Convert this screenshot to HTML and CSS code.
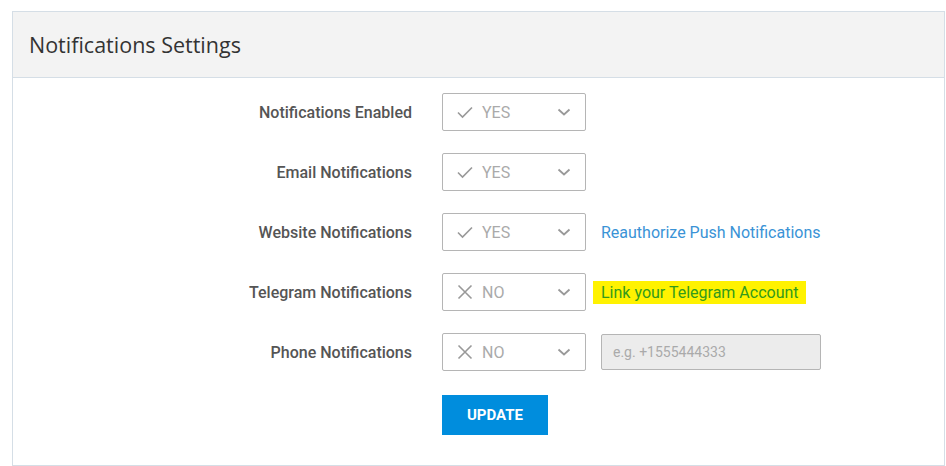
FILE: index.html
```html
<!DOCTYPE html>
<html>
<head>
<meta charset="utf-8">
<link rel="stylesheet" href="styles.css">
</head>
<body>
<div class="page">
  <section class="card">
    <header class="card-header">
      <h2 class="card-title">Notifications Settings</h2>
    </header>
    <div class="card-body">
      <div class="row">
        <label class="label">Notifications Enabled</label>
        <div class="select">
          <svg class="ico" viewBox="0 0 18 18"><path d="M2 9.5l4.5 4.5L16 4.5" fill="none" stroke="currentColor" stroke-width="1.6"/></svg>
          <span class="val">YES</span>
          <svg class="chev" viewBox="0 0 14 10"><path d="M1.5 2.5l5.5 5 5.5-5" fill="none" stroke="currentColor" stroke-width="1.8"/></svg>
        </div>
      </div>
      <div class="row">
        <label class="label">Email Notifications</label>
        <div class="select">
          <svg class="ico" viewBox="0 0 18 18"><path d="M2 9.5l4.5 4.5L16 4.5" fill="none" stroke="currentColor" stroke-width="1.6"/></svg>
          <span class="val">YES</span>
          <svg class="chev" viewBox="0 0 14 10"><path d="M1.5 2.5l5.5 5 5.5-5" fill="none" stroke="currentColor" stroke-width="1.8"/></svg>
        </div>
      </div>
      <div class="row">
        <label class="label">Website Notifications</label>
        <div class="select">
          <svg class="ico" viewBox="0 0 18 18"><path d="M2 9.5l4.5 4.5L16 4.5" fill="none" stroke="currentColor" stroke-width="1.6"/></svg>
          <span class="val">YES</span>
          <svg class="chev" viewBox="0 0 14 10"><path d="M1.5 2.5l5.5 5 5.5-5" fill="none" stroke="currentColor" stroke-width="1.8"/></svg>
        </div>
        <a class="link">Reauthorize Push Notifications</a>
      </div>
      <div class="row">
        <label class="label">Telegram Notifications</label>
        <div class="select">
          <svg class="ico" viewBox="0 0 18 18"><path d="M2.5 2.5l13 13M15.5 2.5l-13 13" fill="none" stroke="currentColor" stroke-width="1.6"/></svg>
          <span class="val">NO</span>
          <svg class="chev" viewBox="0 0 14 10"><path d="M1.5 2.5l5.5 5 5.5-5" fill="none" stroke="currentColor" stroke-width="1.8"/></svg>
        </div>
        <a class="link highlight">Link your Telegram Account</a>
      </div>
      <div class="row">
        <label class="label">Phone Notifications</label>
        <div class="select">
          <svg class="ico" viewBox="0 0 18 18"><path d="M2.5 2.5l13 13M15.5 2.5l-13 13" fill="none" stroke="currentColor" stroke-width="1.6"/></svg>
          <span class="val">NO</span>
          <svg class="chev" viewBox="0 0 14 10"><path d="M1.5 2.5l5.5 5 5.5-5" fill="none" stroke="currentColor" stroke-width="1.8"/></svg>
        </div>
        <input class="phone" type="text" placeholder="e.g. +1555444333" disabled>
      </div>
      <div class="row actions">
        <span class="label"></span>
        <button class="btn">UPDATE</button>
      </div>
    </div>
  </section>
</div>
</body>
</html>
```

FILE: styles.css
```css
* { box-sizing: border-box; }
html, body { margin: 0; padding: 0; background: #fff; }
body { font-family: Roboto, "Liberation Sans", sans-serif; }
.page { padding: 11px 1px 0 12px; }
.card {
  border: 1px solid #d5dee6;
  background: #fff;
  height: 455px;
}
.card-header {
  background: #f3f3f3;
  border-bottom: 1px solid #d5dee6;
  height: 66px;
  display: flex;
  align-items: center;
  padding-left: 16px;
}
.card-title {
  margin: 0;
  font-family: "Open Sans", "DejaVu Sans", sans-serif;
  font-weight: 400;
  font-size: 21.5px;
  color: #333;
  margin-top: -1px;
}
.card-body {
  padding-top: 15px;
  display: flex;
  flex-direction: column;
  gap: 22px;
}
.row {
  display: flex;
  align-items: center;
  height: 38px;
}
.label {
  width: 399px;
  text-align: right;
  font-size: 16px;
  font-weight: 500;
  color: #555;
  margin-right: 30px;
}
.select {
  width: 144px;
  height: 38px;
  border: 1px solid #b5b5b5;
  border-radius: 2px;
  display: flex;
  align-items: center;
  padding-left: 13px;
  color: #aaa;
}
.ico { width: 18px; height: 18px; color: #999; }
.val { font-size: 16px; margin-left: 8px; color: #aaa; flex: 1; }
.chev { width: 14px; height: 10px; color: #999; margin-right: 14px; }
.link {
  margin-left: 15px;
  font-size: 16px;
  color: #3a93d6;
  cursor: pointer;
}
.link.highlight {
  color: #339a1c;
  background: #fff200;
  padding: 2px 7px 2px 8px;
  margin-left: 7px;
}
.phone {
  margin-left: 15px;
  width: 220px;
  height: 36px;
  background: #ececec;
  border: 1px solid #b5b5b5;
  border-radius: 2px;
  padding: 0 11px;
  font-family: Roboto, sans-serif;
  font-size: 14px;
}
.phone::placeholder { color: #aaa; }
.actions { height: 40px; margin-top: 2px; }
.btn {
  width: 106px;
  height: 40px;
  background: #008ddd;
  color: #fff;
  border: 0;
  font-family: Roboto, sans-serif;
  font-weight: 700;
  font-size: 15px;
}
```
